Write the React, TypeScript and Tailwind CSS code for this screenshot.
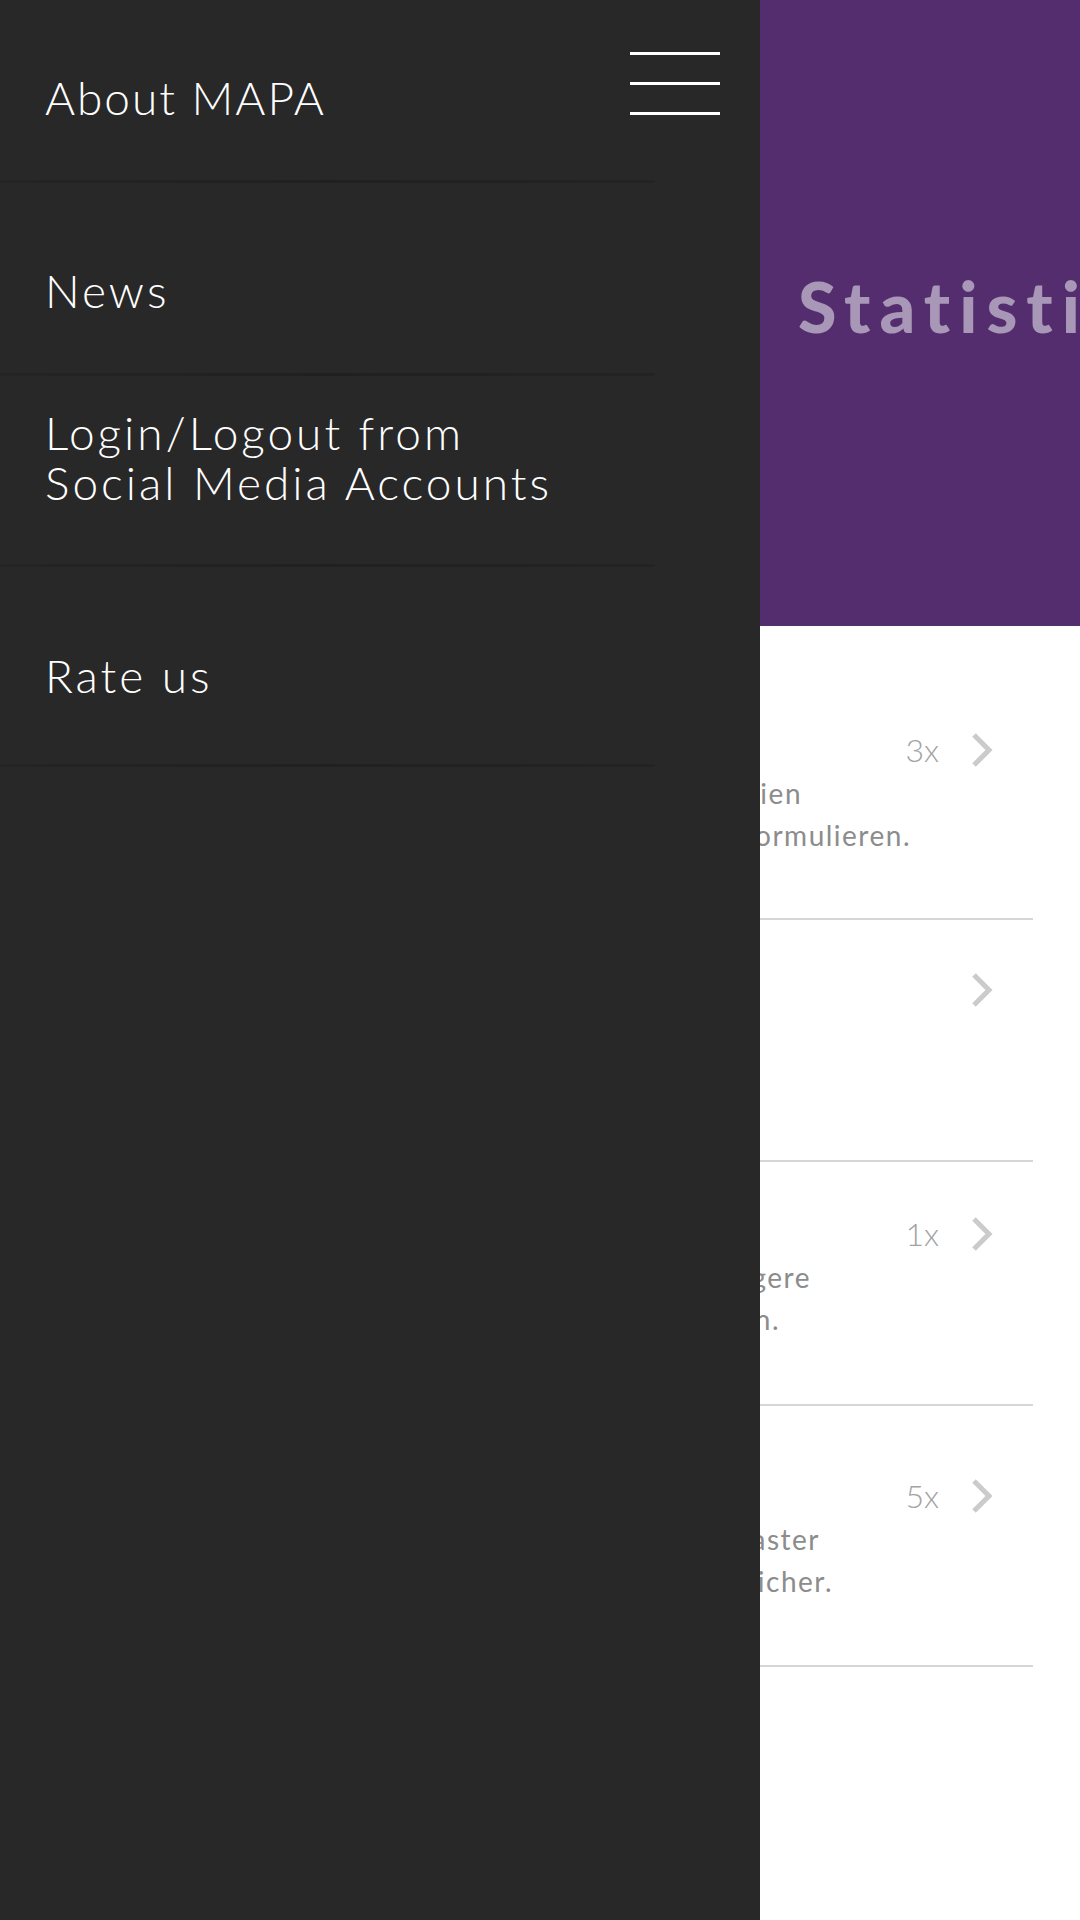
import React from "react";

interface StatRow {
  id: string;
  title: string;
  count?: string;
  lines: { text: string; width: string }[];
  pad: string;
  height: string;
}

const rows: StatRow[] = [
  {
    id: "hypothesen",
    title: "Hypothesen",
    count: "3x",
    lines: [
      { text: "Du kannst Hypothesen zu Studien", width: "w-[802px]" },
      { text: "selbstständig formulieren.", width: "w-[911px]" },
    ],
    pad: "pt-[54px]",
    height: "h-[244px]",
  },
  {
    id: "quellen",
    title: "Quellen",
    lines: [],
    pad: "pt-[50px]",
    height: "h-[242px]",
  },
  {
    id: "zusammenhang",
    title: "Zusammenhänge",
    count: "1x",
    lines: [
      { text: "Du kannst Texte in längere", width: "w-[811px]" },
      { text: "Zusammenhänge einordnen.", width: "w-[780px]" },
    ],
    pad: "pt-[52px]",
    height: "h-[244px]",
  },
  {
    id: "muster",
    title: "Muster",
    count: "5x",
    lines: [
      { text: "Du erkennst Muster und Raster", width: "w-[820px]" },
      { text: "in Texten schneller und sicher.", width: "w-[833px]" },
    ],
    pad: "pt-[70px]",
    height: "h-[261px]",
  },
];

const menu = [
  { label: ["News"], height: "h-[190px]", pad: "pt-[83px]" },
  { label: ["Login/Logout from", "Social Media Accounts"], height: "h-[188px]", pad: "pt-[32px]" },
  { label: ["Rate us"], height: "h-[197px]", pad: "pt-[84px]" },
];

function Chevron() {
  return (
    <svg width="22" height="36" viewBox="0 0 22 36" fill="none">
      <path d="M3 3 L18 18 L3 33" stroke="#cbcbcb" strokeWidth="5" />
    </svg>
  );
}

function Divider() {
  return <div className="h-[3px] w-[655px] bg-linear-to-r from-[#242424] via-[#202020] to-[#232323]" />;
}

function Drawer() {
  return (
    <aside className="absolute left-0 top-0 h-full w-[760px] bg-[#282828] text-white font-['Lato','Liberation_Sans',sans-serif] font-light">
      <div className="flex h-[180px] justify-between pl-[45px] pr-[40px]">
        <div className="pt-[74px] text-[46px] leading-[48px] tracking-[2px]">About MAPA</div>
        <button className="mt-[52px] flex h-[63px] w-[90px] flex-col justify-between">
          <span className="block h-[3px] w-full bg-white" />
          <span className="block h-[3px] w-full bg-white" />
          <span className="block h-[3px] w-full bg-white" />
        </button>
      </div>
      <Divider />
      {menu.map((item) => (
        <div key={item.label[0]}>
          <div className={`${item.height} ${item.pad} pl-[45px] text-[46px] leading-[50px] tracking-[3px]`}>
            {item.label.map((l) => (
              <div key={l}>{l}</div>
            ))}
          </div>
          <Divider />
        </div>
      ))}
    </aside>
  );
}

export default function App() {
  return (
    <div className="relative h-[1920px] w-[1080px] overflow-hidden bg-white font-['Lato','Liberation_Sans',sans-serif]">
      <header className="h-[626px] overflow-hidden bg-[#532d6d] pl-[798px] pt-[266px]">
        <h1 className="whitespace-nowrap text-[70px] font-black leading-[80px] tracking-[9px] text-[#a897b6]">Statistik</h1>
      </header>

      <main className="pr-[47px] pt-[50px]">
        {rows.map((row) => (
          <div key={row.id} className={`${row.height} ${row.pad} border-b-2 border-[#d6d6d6]`}>
            <div className="flex h-[40px] items-center justify-between pr-[40px]">
              <span className="pl-[40px] text-[34px] text-[#333]">{row.title}</span>
              <div className="flex items-center gap-[32px]">
                {row.count && <span className="text-[32px] font-light text-[#a3a3a3]">{row.count}</span>}
                <Chevron />
              </div>
            </div>
            <div className="mt-[2px]">
              {row.lines.map((l) => (
                <p key={l.text} className={`${l.width} whitespace-nowrap text-right text-[28px] leading-[42px] tracking-[1.5px] text-[#8c8c8c]`}>
                  {l.text}
                </p>
              ))}
            </div>
          </div>
        ))}
      </main>

      <Drawer />
    </div>
  );
}
